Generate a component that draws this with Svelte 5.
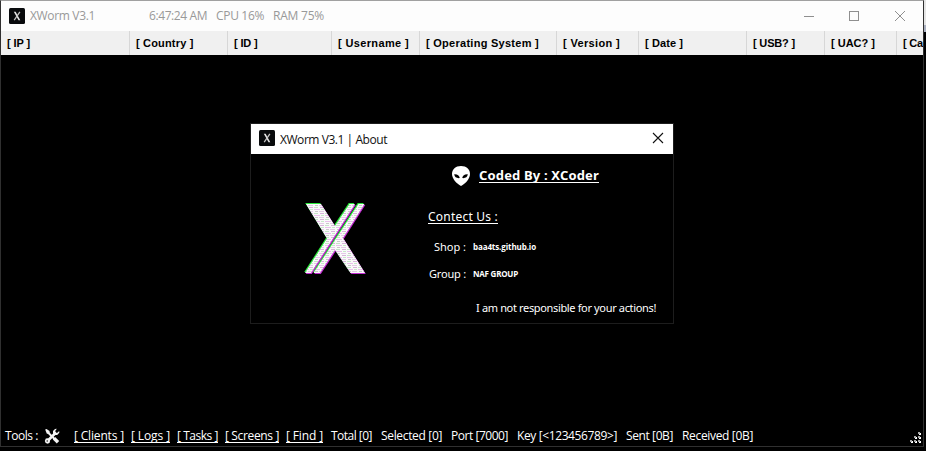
<script>
  const columns = [
    { label: '[ IP ]', width: 129, text: 23 },
    { label: '[ Country ]', width: 98, text: 57.5 },
    { label: '[ ID ]', width: 104, text: 23.5 },
    { label: '[ Username ]', width: 88, text: 71 },
    { label: '[ Operating System ]', width: 137, text: 113 },
    { label: '[ Version ]', width: 82, text: 57 },
    { label: '[ Date ]', width: 108, text: 38 },
    { label: '[ USB? ]', width: 78, text: 42 },
    { label: '[ UAC? ]', width: 72, text: 44 },
    { label: '[ Ca', width: 27, text: 20 }
  ];
  const links = [
    { label: '[ Clients ]', width: 50, gap: 7 },
    { label: '[ Logs ]', width: 39, gap: 7 },
    { label: '[ Tasks ]', width: 41, gap: 7 },
    { label: '[ Screens ]', width: 54, gap: 7 },
    { label: '[ Find ]', width: 37, gap: 8 }
  ];
  const stats = [
    { label: 'Total [0]', width: 41, gap: 9 },
    { label: 'Selected [0]', width: 61, gap: 9 },
    { label: 'Port [7000]', width: 57, gap: 9 },
    { label: 'Key [<123456789>]', width: 100, gap: 9 },
    { label: 'Sent [0B]', width: 47, gap: 9 },
    { label: 'Received [0B]', width: 71, gap: 0 }
  ];

  // Tracks a label so that it fills its designed width.
  function fit(node, width) {
    node.style.letterSpacing = '0px';
    const natural = node.getBoundingClientRect().width;
    node.style.letterSpacing = (width - natural) / node.textContent.length + 'px';
  }
</script>

{#snippet appIcon()}
  <svg class="app-icon" width="16" height="16" viewBox="0 0 16 16">
    <rect width="16" height="16" rx="1.5" fill="#080a0c" />
    <path d="M4.800 3.800h1.800l4.700 8.400H9.500z" fill="#e8e8e8" />
    <path d="M10.900 3.800 5.200 12.200" stroke="#c4c4c4" stroke-width="1.300" />
  </svg>
{/snippet}

<div class="desktop">
  <main class="window">
    <header class="titlebar">
      {@render appIcon()}
      <span class="name" use:fit={65}>XWorm V3.1</span>
      <span class="clock" use:fit={58}>6:47:24 AM</span>
      <span class="meter" use:fit={48}>CPU 16%</span>
      <span class="meter" use:fit={51}>RAM 75%</span>
      <svg class="controls" width="110" height="14" viewBox="0 0 110 14" fill="none" stroke="#8f8f8f">
        <path d="M4 7.500h10" />
        <rect x="49.500" y="2.500" width="9" height="9" />
        <path d="m95 2 10 10m0-10L95 12" />
      </svg>
    </header>

    <div class="columns">
      {#each columns as c}
        <div class="column" style:width="{c.width}px"><span use:fit={c.text}>{c.label}</span></div>
      {/each}
    </div>

    <section class="list"></section>

    <footer>
      <span class="tools" use:fit={33}>Tools :</span>
      <svg class="tool-icon" width="16" height="16" viewBox="0 0 16 16">
        <path d="m3 13.500 9-9" stroke="#f4f4f4" stroke-width="2.700" />
        <path d="m4 4.500 7 7" stroke="#f4f4f4" stroke-width="1.900" />
        <path d="m10 10.300 4 4" stroke="#f4f4f4" stroke-width="3.400" />
        <path d="m1.200 1.500 1.300-.5 3 2.100.2 1.700-1.300 1.200-1.700-.4z" fill="#f4f4f4" />
        <path d="M12.900.8 11 .9 9 3v2.500l1.500 1.500 2.700-.1 2.100-2.200-.1-1.700-2.200 1.900-1.400-.4-.4-1.500z" fill="#f4f4f4" />
        <path d="m1.800 10.600 2.200-.3 2 1.800-.2 2.300-1.900 1.300-2.200-.6-.9-2z" fill="#f4f4f4" />
        <circle cx="3.200" cy="13" r=".7" fill="#000" />
      </svg>
      {#each links as l}
        <span class="link" style:width="{l.width}px" style:margin-right="{l.gap}px"><span use:fit={l.width}>{l.label}</span></span>
      {/each}
      {#each stats as s}
        <span class="stat" style:width="{s.width}px" style:margin-right="{s.gap}px"><span use:fit={s.width}>{s.label}</span></span>
      {/each}
      <svg class="grip" width="12" height="12" viewBox="0 0 12 12" fill="#a8a8a8">
        {#each [[8, 0], [4, 4], [8, 4], [0, 8], [4, 8], [8, 8]] as [x, y]}
          <rect x={x + 1} y={y + 1} width="2" height="2" fill="#fff" />
          <rect {x} {y} width="2" height="2" />
        {/each}
      </svg>
    </footer>
  </main>

  <aside class="edge"></aside>

  <div class="dialog" role="dialog" aria-label="About">
    <header>
      {@render appIcon()}
      <span class="dialog-title" use:fit={107}>XWorm V3.1 | About</span>
      <svg class="close" width="12" height="12" viewBox="0 0 12 12" stroke="#111" stroke-width="1.100">
        <path d="m1 1 10 10M11 1 1 11" />
      </svg>
    </header>
    <div class="about">
      <svg class="logo" width="64" height="74" viewBox="0 0 64 74">
        <defs>
          <pattern id="scan" width="11" height="6" patternUnits="userSpaceOnUse">
            <rect width="11" height="6" fill="#fafafa" />
            <rect y="1" width="6" height="1" fill="#e9bfec" />
            <rect x="7" y="1" width="3" height="1" fill="#c7e8c9" />
            <rect x="1" y="3" width="3" height="1" fill="#c9c9c9" />
            <rect x="5" y="3" width="5" height="1" fill="#e3cbe6" />
            <rect y="5" width="4" height="1" fill="#c5e4c8" />
            <rect x="6" y="5" width="4" height="1" fill="#d9b4dc" />
          </pattern>
          <path id="glyph" d="M3 2H18L32 24 46.500 2H52L8 71H2L24 36.500ZM55.500 2H61.500L40 36 62 71H47.500L32 48 17 71H10.500Z" />
        </defs>
        <use href="#glyph" x="-.8" y="-.9" fill="#29e83a" />
        <use href="#glyph" x=".8" y="1.100" fill="#c22bd2" />
        <use href="#glyph" fill="url(#scan)" />
      </svg>
      <div class="details">
        <div class="author">
          <svg width="20" height="22" viewBox="0 0 20 22">
            <path d="M10 1C4.500 1 1 4.300 1 9c0 4.800 4.600 9.800 9 12 4.400-2.200 9-7.200 9-12 0-4.700-3.500-8-9-8z" fill="#fff" />
            <path d="M3.200 9.300c3.200-.2 5.100 1 5.600 3.800-3.200.3-5.200-.8-5.600-3.800zm13.600 0c-3.200-.2-5.100 1-5.600 3.800 3.200.3 5.200-.8 5.600-3.800z" />
          </svg>
          <strong use:fit={120}>Coded By : XCoder</strong>
        </div>
        <div class="contact"><span use:fit={70}>Contect Us :</span></div>
        <div class="row"><span class="key"><span use:fit={32}>Shop :</span></span><b use:fit={63}>baa4ts.github.io</b></div>
        <div class="row"><span class="key"><span use:fit={37}>Group :</span></span><b use:fit={45}>NAF GROUP</b></div>
        <div class="notice"><span use:fit={180}>I am not responsible for your actions!</span></div>
      </div>
    </div>
  </div>
</div>

<style>
  .desktop {
    position: relative;
    display: flex;
    width: 926px;
    height: 451px;
    overflow: hidden;
    background: #000;
    color: #fff;
    font: 12px/16px "Open Sans", "Noto Sans", sans-serif;
    white-space: nowrap;
  }
  .desktop * { box-sizing: border-box; }
  svg { display: block; flex: none; }
  .window {
    display: flex;
    flex-direction: column;
    width: 924px;
    height: 447px;
    overflow: hidden;
    border: 1px solid #303030;
    border-top-color: #a0a0a0;
  }
  .titlebar {
    display: flex;
    align-items: center;
    flex: none;
    height: 30px;
    padding: 0 13px 0 8px;
    background: #fdfdfd;
    color: #999;
  }
  .app-icon { margin-top: -1px; }
  .name { margin: 0 54px 0 5px; }
  .clock, .meter { margin: 0 9px 0 0; }
  .controls { margin: -1px 0 0 auto; }
  .columns {
    display: flex;
    flex: none;
    height: 24px;
    background: #f0f0f0;
    color: #000;
    font: bold 11px/24px "Liberation Sans", sans-serif;
  }
  .column {
    flex: none;
    padding-left: 6px;
    border-right: 1px solid #d7d7d7;
  }
  .column:last-child { border-right: 0; }
  .list { flex: 1; }
  footer {
    display: flex;
    align-items: center;
    flex: none;
    height: 21px;
    padding-left: 4px;
  }
  .tools { margin-right: 6px; }
  .tool-icon { margin-right: 14px; }
  .link, .stat { flex: none; }
  .link { height: 14px; border-bottom: 1px solid #fff; line-height: 14px; }
  .grip { margin: 5px 1px 0 auto; }
  .edge {
    width: 2px;
    height: 32px;
    background: linear-gradient(#e5e5e5 25px, #aab0c0 25px);
  }
  .dialog {
    position: absolute;
    left: 250px;
    top: 123px;
    display: flex;
    flex-direction: column;
    width: 424px;
    height: 201px;
    border: 1px solid #1d1d1d;
    background: #000;
  }
  .dialog header {
    display: flex;
    align-items: center;
    flex: none;
    height: 30px;
    padding: 0 9px 2px 8px;
    background: #fff;
    color: #101010;
  }
  .dialog-title { margin: 3px 0 0 5px; }
  .close { margin-left: auto; }
  .about { display: flex; flex: 1; }
  .logo { flex: none; margin: 48px 60px 0 52px; }
  .details {
    display: flex;
    flex-direction: column;
  }
  .author {
    display: flex;
    align-items: center;
    gap: 8px;
    height: 22px;
    margin: 11px 0 0 24px;
  }
  .author strong {
    height: 15px;
    margin-top: -1px;
    border-bottom: 1px solid #fff;
    font: bold 13px/14px "Noto Sans", sans-serif;
  }
  .contact { margin-top: 23px; padding-left: 1px; font: 12px/14px "Noto Sans", sans-serif; }
  .contact span { display: inline-block; height: 14px; border-bottom: 1px solid #fff; }
  .row { display: flex; align-items: center; height: 27px; }
  .contact + .row { margin-top: 9px; }
  .key { width: 39px; margin-right: 7px; text-align: right; font: 11px/16px "Noto Sans", sans-serif; }
  .row b { margin-top: 1px; font: bold 8px/16px "Open Sans", sans-serif; }
  .notice { margin: 13px 0 0 49px; font: 11px/16px "Noto Sans", sans-serif; }
</style>
